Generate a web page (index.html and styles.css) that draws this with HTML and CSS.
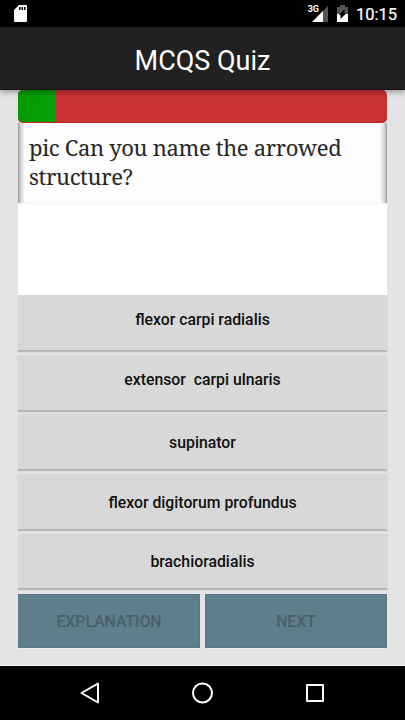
FILE: index.html
```html
<!DOCTYPE html>
<html lang="en">
<head>
<meta charset="utf-8">
<title>MCQS Quiz</title>
<link rel="stylesheet" href="styles.css">
</head>
<body>
<div class="status">
  <svg class="sd" width="13" height="17" viewBox="0 0 13 17"><path fill="#fff" d="M5 0h7q1 0 1 1v15q0 1-1 1H1q-1 0-1-1V5z"/><path fill="#000" d="M5 2h1.500v3H5zM7.500 2H9v3H7.500zM10 2h1.500v3H10z"/></svg>
  <span class="net">3G</span>
  <svg class="signal" width="16" height="16" viewBox="0 0 16 16"><path fill="#555" d="M16 0v16H0z"/><path fill="#fff" d="M11 5v11H0z"/></svg>
  <svg class="battery" width="11" height="17" viewBox="0 0 11 17"><path fill="#555" d="M3 0h5v2h3v15H0V2h3z"/><path fill="#fff" d="M0 9h11v8H0z"/><path fill="#000" d="M7.500 4v4.500H9L3.500 14v-4H2z"/></svg>
  <span class="clock">10:15</span>
</div>
<header class="appbar"><h1>MCQS Quiz</h1></header>
<main>
  <div class="progress"><div class="done"></div></div>
  <div class="question">pic Can you name the arrowed<br>structure?</div>
  <div class="picture"></div>
  <div class="answers">
    <button class="raised">flexor carpi radialis</button>
    <button class="raised">extensor&nbsp; carpi ulnaris</button>
    <button class="level">supinator</button>
    <button class="lower">flexor digitorum profundus</button>
    <button class="lower">brachioradialis</button>
  </div>
  <div class="actions"><button>EXPLANATION</button><button>NEXT</button></div>
</main>
<nav>
  <svg width="20" height="22" viewBox="0 0 20 22"><path d="M18 1.500v19L1.500 11z"/></svg>
  <svg width="22" height="22" viewBox="0 0 22 22"><circle cx="10.500" cy="11" r="9.500"/></svg>
  <svg width="20" height="22" viewBox="0 0 20 22"><path d="M2 3h16v16H2z"/></svg>
</nav>
</body>
</html>
```
FILE: styles.css
```css
* { box-sizing: border-box; }
body { margin: 0; width: 405px; height: 720px; overflow: hidden; background: #e4e4e4; font-family: Roboto, "Liberation Sans", sans-serif; display: flex; flex-direction: column; }
.status { height: 27px; flex: none; background: #000; color: #fff; display: flex; align-items: flex-start; padding: 5px 9px 0 14px; }
.status svg { display: block; flex: none; }
.net { margin-left: auto; font: 700 9px/9px Roboto, sans-serif; }
.signal { margin: 1px 9px 0 -7px; }
.clock { width: 40px; margin-left: 8px; font: 400 16.500px/19px Roboto, sans-serif; white-space: nowrap; -webkit-text-stroke: .2px #fff; }
.appbar { height: 63px; flex: none; background: #212121; border-bottom: 1px solid #141414; color: #fff; display: flex; align-items: center; justify-content: center; position: relative; z-index: 1; box-shadow: 0 2px 6px rgba(0,0,0,.35); }
h1 { margin: 5px 0 0; font: 400 27px/32px Roboto, sans-serif; }
main { height: 576px; flex: none; padding: 0 18px; border-bottom: 1px solid #f8f8f8; }
.progress { height: 33px; border-radius: 5px; background: #c93232; overflow: hidden; border-bottom: 1px solid #c11f22; }
.done { width: 38px; height: 33px; background: linear-gradient(90deg, #029b02, #0c9f0c); }
.question { height: 80px; padding: 10px 11px; color: #272727; font: 22px/29px "Noto Serif", "Droid Serif", "DejaVu Serif Condensed", "DejaVu Serif", serif; letter-spacing: -.34px; white-space: nowrap; background: linear-gradient(90deg, #999 0, #d9d9d9 3px, #fdfdfd 7px, #fdfdfd 362px, #d9d9d9 366px, #999 369px); }
.picture { height: 92px; background: #fff; border-top: 1px solid #f5f5f5; }
button { display: block; border: 0; padding: 0; color: #111; font: 500 15.800px/20px Roboto, sans-serif; }
.answers { height: 299px; display: grid; grid-template-rows: 55px repeat(4, 54.700px); row-gap: 4.900px; }
.answers button { background: #d8d8d8; box-shadow: 0 1px 0 #b2b2b2, 0 2px 1px #b9b9b9; }
.answers .raised { padding-bottom: 5px; }
.answers .level { padding-top: 2px; }
.answers .lower { padding-top: 3px; }
.actions { height: 54px; display: grid; grid-template-columns: 182px 182px; column-gap: 5px; }
.actions button { padding-top: 2px; background: #607d8b; border: 1px solid #54788a; color: #48606b; box-shadow: 0 1px 0 #f0f0f0; }
nav { height: 54px; flex: none; background: #000; display: flex; justify-content: space-between; padding: 16px 80px 0; }
nav svg { fill: none; stroke: #fff; stroke-width: 2; stroke-linejoin: round; }
```
